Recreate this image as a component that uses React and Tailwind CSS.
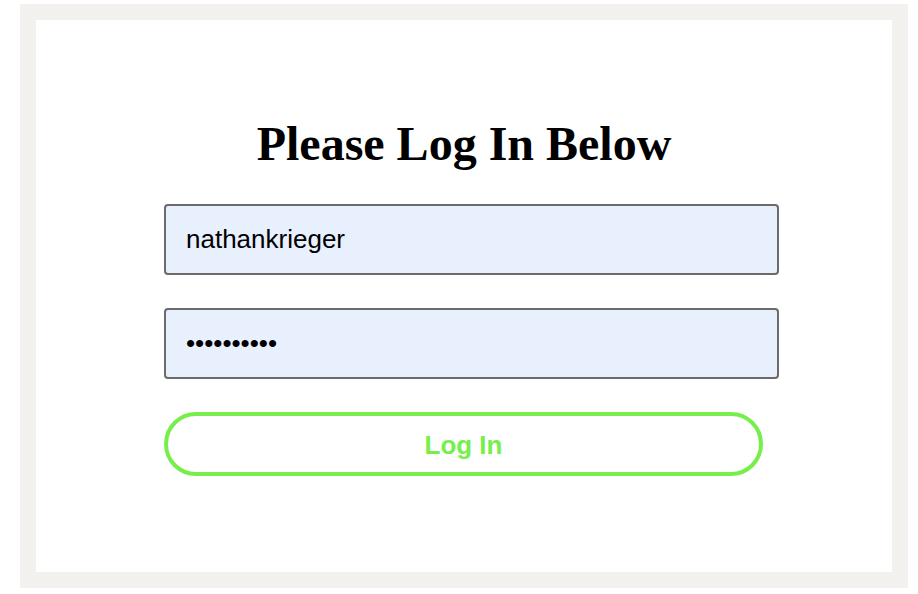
export default function App() {
  return (
    <div className="pt-[4px] pl-[20px] bg-white min-h-[594px]">
      <div className="w-[888px] h-[584px] border-[16px] border-[#f2f1ee] bg-white">
        <h1 className="pt-[97px] text-center text-[48px] leading-[53px] font-bold text-black font-['Liberation_Serif',serif]">
          Please Log In Below
        </h1>
        <form className="ml-[128px] mt-[34px] flex flex-col gap-[33px] font-['Liberation_Sans',Arial,sans-serif]">
          <input
            type="text"
            defaultValue="nathankrieger"
            className="w-[615px] h-[71px] px-[20px] text-[26px] text-black bg-[#e8f0fe] border-2 border-[#6b6b6b] rounded-[4px] outline-none"
          />
          <input
            type="password"
            defaultValue="nathankrie"
            className="w-[615px] h-[71px] px-[20px] text-[26px] text-black bg-[#e8f0fe] border-2 border-[#6b6b6b] rounded-[4px] outline-none"
          />
          <button
            type="button"
            className="w-[599px] h-[64px] pt-[2px] border-4 border-[#76ef4c] rounded-full bg-white text-[26px] font-bold text-[#76ef4c]"
          >
            Log In
          </button>
        </form>
      </div>
    </div>
  );
}
